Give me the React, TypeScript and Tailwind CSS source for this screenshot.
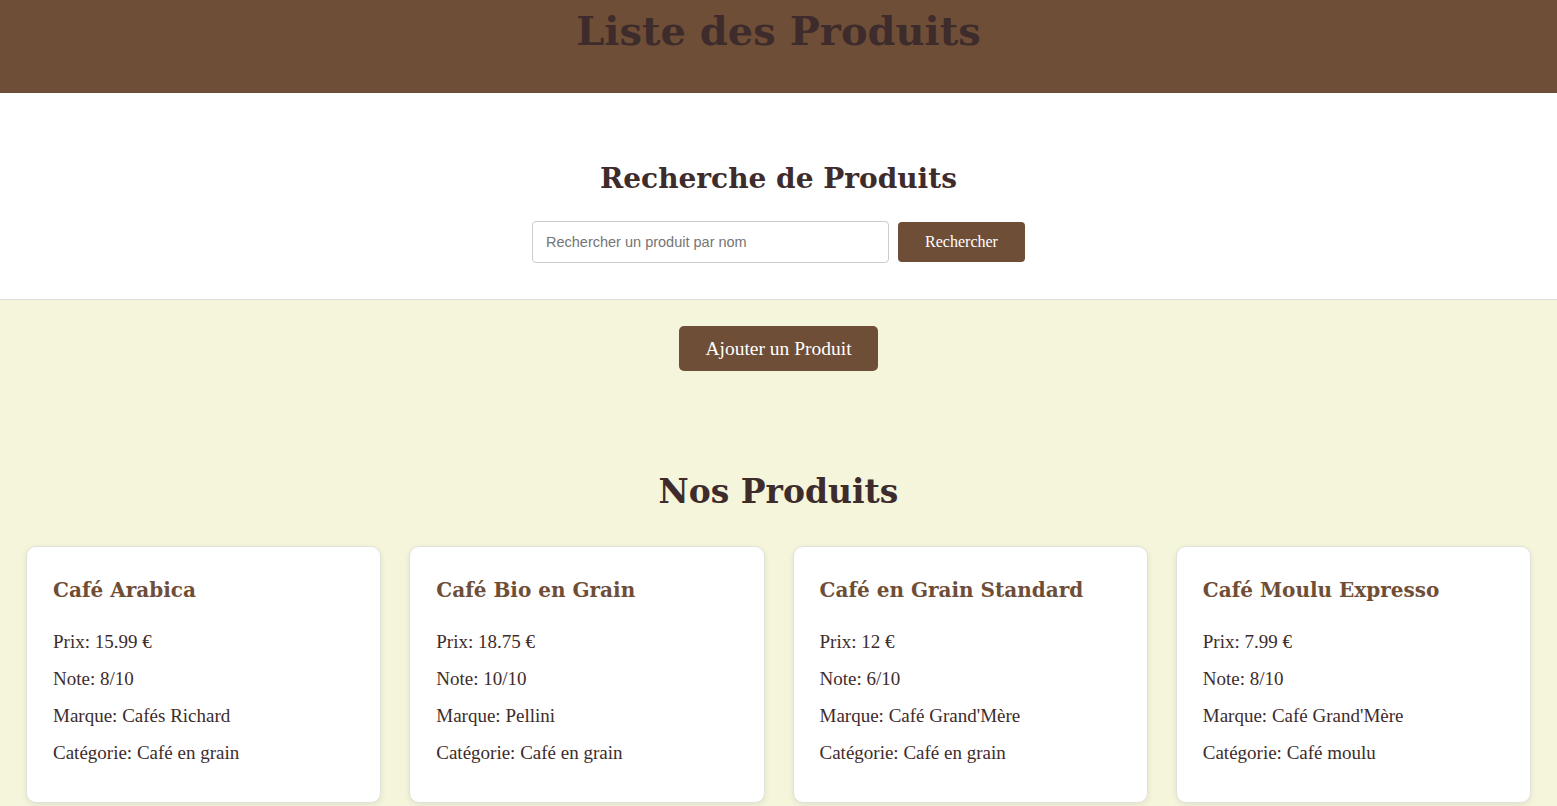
const products = [
  { name: "Café Arabica", prix: "15.99", note: "8/10", marque: "Cafés Richard", categorie: "Café en grain" },
  { name: "Café Bio en Grain", prix: "18.75", note: "10/10", marque: "Pellini", categorie: "Café en grain" },
  { name: "Café en Grain Standard", prix: "12", note: "6/10", marque: "Café Grand'Mère", categorie: "Café en grain" },
  { name: "Café Moulu Expresso", prix: "7.99", note: "8/10", marque: "Café Grand'Mère", categorie: "Café moulu" },
];

export default function App() {
  return (
    <div className="min-h-screen bg-[#f5f5dc] font-['Liberation_Serif',serif] text-[#3e2c2c]">
      {/* Header */}
      <header className="h-[93px] bg-[#6f4e37] text-center">
        <h1 className="pt-[11px] font-['DejaVu_Serif',serif] text-[40px] font-bold leading-none text-[#3e2c2c]">
          Liste des Produits
        </h1>
      </header>

      {/* Search */}
      <section className="flex flex-col items-center border-b border-[#dddddd] bg-white pt-[72px] pb-[36px]">
        <h2 className="font-['DejaVu_Serif',serif] text-[28px] font-bold leading-none text-[#3e2c2c]">
          Recherche de Produits
        </h2>
        <div className="mt-[28px] flex items-center gap-[9px]">
          <input
            type="text"
            placeholder="Rechercher un produit par nom"
            className="h-[42px] w-[357px] rounded-[4px] border border-[#cccccc] bg-white px-[13px] font-['Liberation_Sans',Arial,sans-serif] text-[14.5px] placeholder:text-[#757575] outline-none"
          />
          <button className="h-[40px] w-[127px] rounded-[4px] bg-[#6f4e37] text-[16px] text-white">
            Rechercher
          </button>
        </div>
      </section>

      {/* Add button */}
      <div className="flex justify-center pt-[26px]">
        <button className="h-[45px] w-[199px] rounded-[5px] bg-[#6f4e37] text-[19.5px] text-white">
          Ajouter un Produit
        </button>
      </div>

      {/* Products */}
      <h2 className="mt-[104px] text-center font-['DejaVu_Serif',serif] text-[33px] font-bold leading-none text-[#3e2c2c]">
        Nos Produits
      </h2>
      <div className="mx-[26px] mt-[38px] grid grid-cols-4 gap-[28px] pb-[20px]">
        {products.map((p) => (
          <div
            key={p.name}
            className="h-[257px] rounded-[10px] border border-[#e2e2dc] bg-white px-[26px] pt-[33px] shadow-[0_2px_6px_rgba(0,0,0,0.08)]"
          >
            <h3 className="font-['DejaVu_Serif',serif] text-[20px] font-bold leading-none text-[#6f4e37] whitespace-nowrap">
              {p.name}
            </h3>
            <div className="mt-[31px] flex flex-col gap-[16px] text-[19px] leading-[21px]">
              <p>Prix: {p.prix} €</p>
              <p>Note: {p.note}</p>
              <p>Marque: {p.marque}</p>
              <p>Catégorie: {p.categorie}</p>
            </div>
          </div>
        ))}
      </div>
    </div>
  );
}
